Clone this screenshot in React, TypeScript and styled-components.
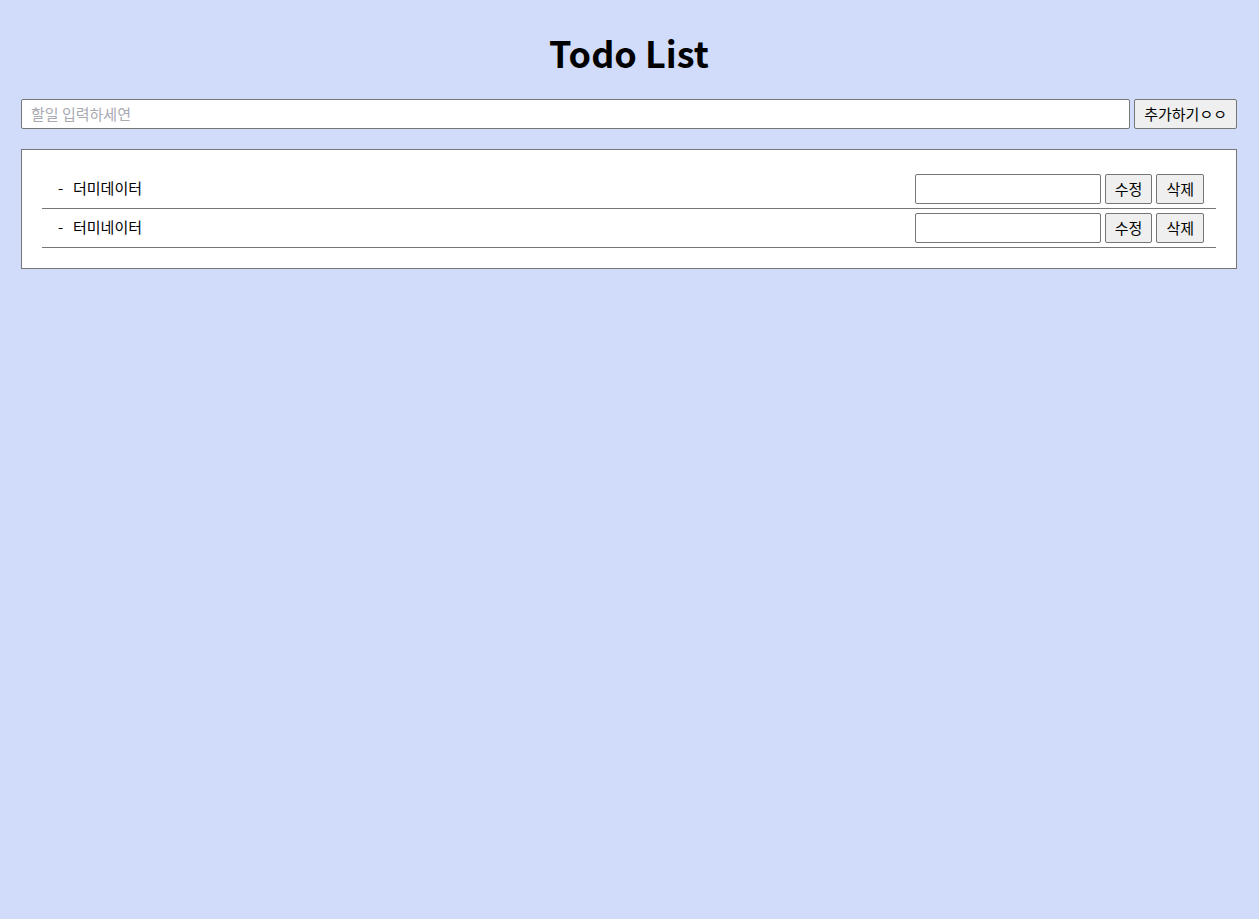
import React, { useState } from "react";
import styled, { createGlobalStyle } from "styled-components";

const Global = createGlobalStyle`
  html, body { margin: 0; padding: 0; }
  body {
    background: #d1dcfa;
    font-family: "Noto Sans CJK KR", "Noto Sans", sans-serif;
    color: #000;
  }
`;

const Page = styled.div`
  padding: 0 22px 0 21px;
`;

const Title = styled.h1`
  margin: 0;
  padding: 27px 0 22px;
  text-align: center;
  font-size: 36px;
  font-weight: 700;
  line-height: 50px;
`;

const Form = styled.form`
  display: flex;
  gap: 4px;
  margin-bottom: 20px;
`;

const TextInput = styled.input<{ $width?: number }>`
  box-sizing: border-box;
  height: 30px;
  border: 1px solid #767676;
  border-radius: 2px;
  background: #fff;
  padding: 0 9px 2px;
  font-family: inherit;
  font-size: 15px;
  ${(p) => (p.$width ? `width: ${p.$width}px; flex: none;` : `flex: 1; min-width: 0;`)}
  &::placeholder { color: #a9a9b3; }
`;

const Button = styled.button`
  box-sizing: border-box;
  height: 30px;
  padding: 0 9px 2px;
  border: 1px solid #767676;
  border-radius: 2px;
  background: #efefef;
  font-family: inherit;
  font-size: 15px;
  color: #000;
  cursor: pointer;
`;

const ListBox = styled.div`
  border: 1px solid #767676;
  background: #fff;
  padding: 20px;
`;

const List = styled.ul`
  list-style: none;
  margin: 0;
  padding: 0;
`;

const Item = styled.li`
  display: flex;
  align-items: center;
  height: 39px;
  box-sizing: border-box;
  border-bottom: 1px solid #767676;
  padding: 0 12px 0 16px;
  gap: 4px;
  font-size: 15px;
`;

const ItemText = styled.span`
  flex: 1;
  padding-bottom: 3px;
`;

const Dash = styled.span`
  display: inline-block;
  width: 15px;
`;

const todos = ["더미데이터", "터미네이터"];

export default function App() {
  const [value, setValue] = useState("");
  return (
    <Page>
      <Global />
      <Title>Todo List</Title>
      <Form onSubmit={(e) => e.preventDefault()}>
        <TextInput
          placeholder="할일 입력하세연"
          value={value}
          onChange={(e) => setValue(e.target.value)}
        />
        <Button type="submit">추가하기ㅇㅇ</Button>
      </Form>
      <ListBox>
        <List>
          {todos.map((t) => (
            <Item key={t}>
              <ItemText>
                <Dash>-</Dash>
                {t}
              </ItemText>
              <TextInput $width={186} />
              <Button>수정</Button>
              <Button>삭제</Button>
            </Item>
          ))}
        </List>
      </ListBox>
    </Page>
  );
}
